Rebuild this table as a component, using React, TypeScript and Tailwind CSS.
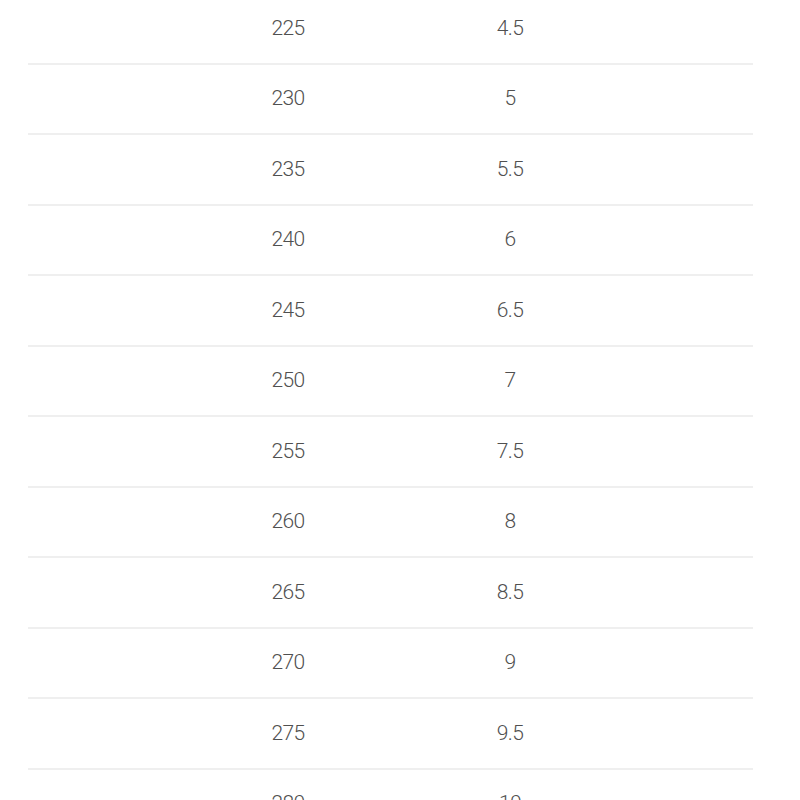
const sizes = [
  ["225", "4.5"],
  ["230", "5"],
  ["235", "5.5"],
  ["240", "6"],
  ["245", "6.5"],
  ["250", "7"],
  ["255", "7.5"],
  ["260", "8"],
  ["265", "8.5"],
  ["270", "9"],
  ["275", "9.5"],
  ["280", "10"],
];

const App = () => (
  <div className="h-[800px] overflow-hidden bg-white">
    <div className="-mt-[6px] px-[28px] pr-[47px]">
      {sizes.map(([mm, us]) => (
        <SizeRow key={mm} mm={mm} us={us} />
      ))}
    </div>
  </div>
);

type SizeRowProps = { mm: string; us: string };
const SizeRow = ({ mm, us }: SizeRowProps) => (
  <div className="grid h-[70.5px] grid-cols-[200px_120px_102px_120px_1fr] items-center border-b-2 border-[#efefef] font-['Roboto',sans-serif] text-[21px] font-light tracking-[-0.6px] text-[#505050]">
    <span />
    <span className="text-center">{mm}</span>
    <span />
    <span className="text-center">{us}</span>
    <span />
  </div>
);

export default App;
